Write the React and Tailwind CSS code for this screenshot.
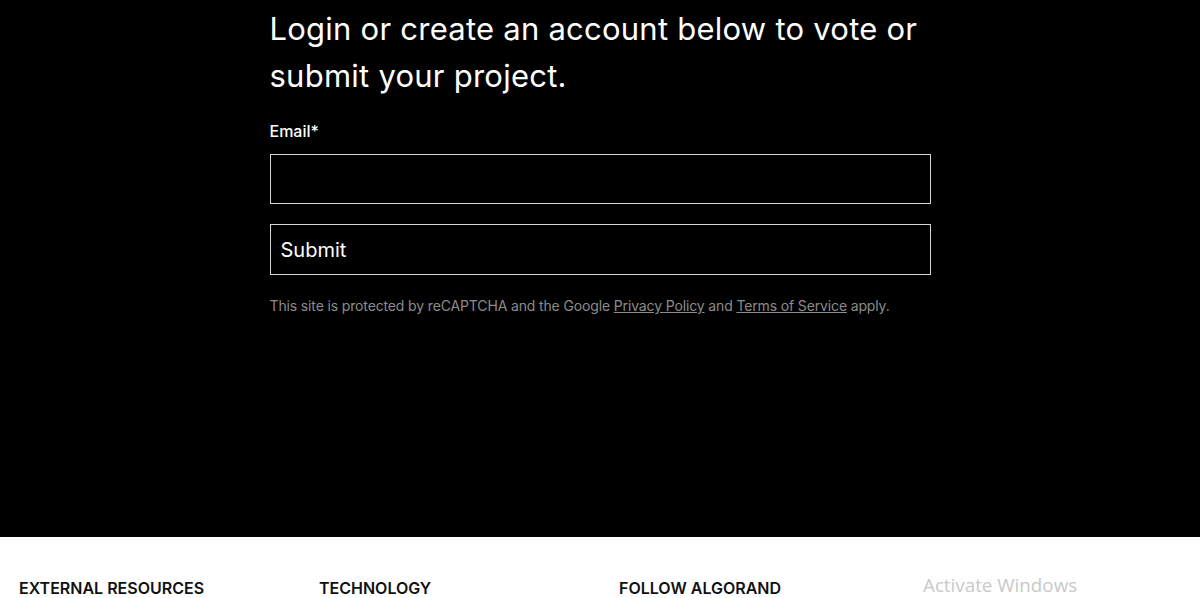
import React from 'react';

const font = { fontFamily: 'Inter, "Liberation Sans", sans-serif' };

const FooterCol = ({ title }) => (
    <div className="w-[300px] pl-[19px]">
        <h4 className="text-[16px] leading-6 font-semibold uppercase text-[#111]">{title}</h4>
    </div>
);

export default function App() {
    return (
        <div className="min-h-screen bg-white" style={font}>
            {/* Login section */}
            <section className="bg-black h-[537px]">
                <div className="w-[661px] mx-auto pt-[5px]">
                    <h2 className="text-white text-[31px] leading-[47px] font-normal tracking-[0.24px]">
                        Login or create an account below to vote or submit your project.
                    </h2>

                    <form className="mt-[20px]" onSubmit={(e) => e.preventDefault()}>
                        <label className="block text-white text-[16px] leading-6 font-medium">Email*</label>
                        <input
                            type="email"
                            className="mt-[11px] block w-full h-[50px] bg-black border border-[#d6d6d6] text-white px-[10px] outline-none"
                        />
                        <button
                            type="submit"
                            className="mt-[20px] block w-full h-[51px] bg-black border border-[#d6d6d6] text-white text-left px-[10px] text-[20px]"
                        >
                            Submit
                        </button>
                        <p className="mt-[21px] text-[14px] leading-5 text-[#8c8c8c] tracking-[-0.14px]">
                            This site is protected by reCAPTCHA and the Google{' '}
                            <a href="#" className="underline">Privacy Policy</a> and{' '}
                            <a href="#" className="underline">Terms of Service</a> apply.
                        </p>
                    </form>
                </div>
            </section>

            {/* Footer */}
            <footer className="bg-white pt-[39px] pb-10 flex">
                <FooterCol title="External Resources" />
                <FooterCol title="Technology" />
                <FooterCol title="Follow Algorand" />
                <div className="pl-[23px] -mt-[3px]">
                    <span
                        className="text-[18.8px] leading-6 text-[#c9c9c9]"
                        style={{ fontFamily: '"Open Sans", "Noto Sans", sans-serif' }}
                    >
                        Activate Windows
                    </span>
                </div>
            </footer>
        </div>
    );
}
